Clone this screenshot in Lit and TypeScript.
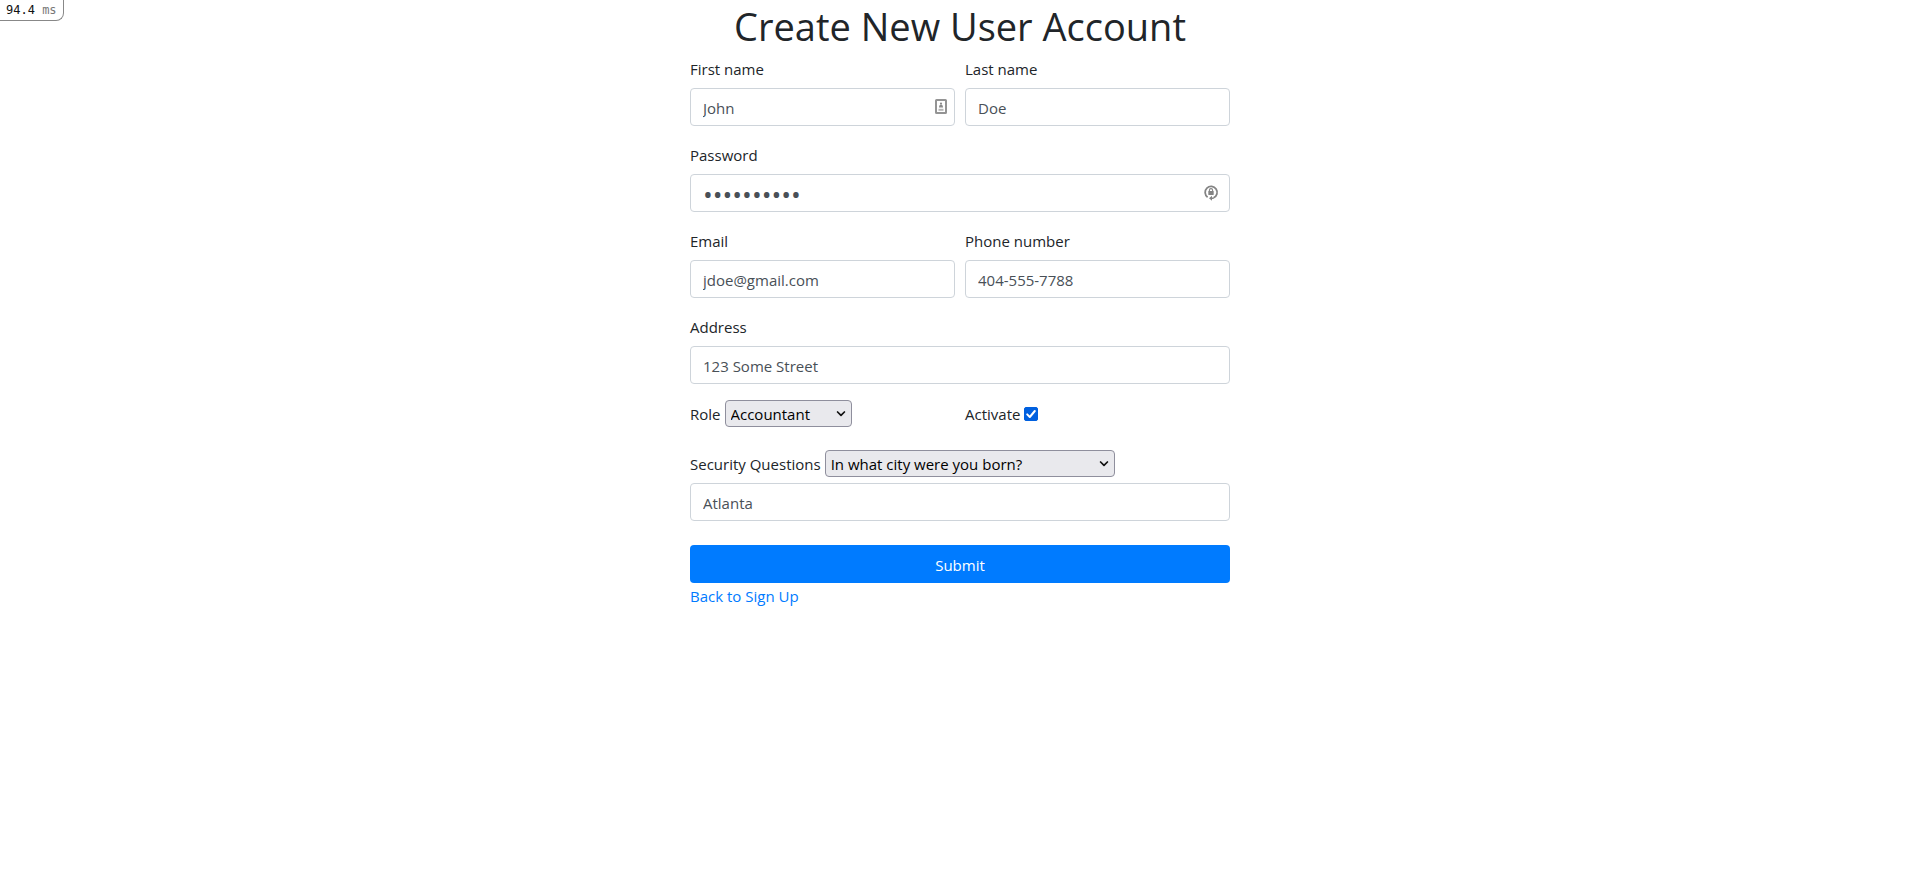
import { LitElement, html, css, nothing, type TemplateResult } from "lit";
import { customElement } from "lit/decorators.js";

interface Field {
  id: string;
  label: string;
  type: string;
  value: string;
  icon?: TemplateResult;
}

const identityIcon = html`<svg class="field-icon" viewBox="0 0 16 16" aria-hidden="true">
  <rect x="3" y="1" width="10" height="13" rx=".5" fill="none" stroke="#949494" stroke-width="2" />
  <circle cx="8" cy="4.6" r="1.1" fill="#8b8b8b" />
  <path d="M6 8.6c0-2 .9-3 2-3s2 1 2 3z" fill="#8b8b8b" />
  <path d="M5.5 10.8h5" stroke="#b5b5b5" stroke-width="2" />
</svg>`;

const passwordIcon = html`<svg class="field-icon lock-icon" viewBox="0 0 16 16" aria-hidden="true">
  <path d="M4.6 12.2a6 6 0 1 1 6 .6" fill="none" stroke="#848484" stroke-width="1.8" />
  <path d="M6.4 6.4V5.2a1.6 1.6 0 0 1 3.2 0v1.2" fill="none" stroke="#848484" stroke-width="1.1" />
  <rect x="5.3" y="6" width="5.4" height="4" rx=".4" fill="#848484" />
  <path d="M6 13.2 9 10.8v1.6h2.4l-1 1.7H9v1.7z" fill="#848484" />
</svg>`;

const chevron = html`<svg class="chevron" viewBox="0 0 10 6" aria-hidden="true">
  <path d="M1.6 1 5 4.4 8.4 1" fill="none" stroke="#111" stroke-width="1.7" stroke-linecap="round" stroke-linejoin="round" />
</svg>`;

@customElement("app-root")
export class AppRoot extends LitElement {
  static styles = css`
    :host {
      display: block;
      font-family: "Open Sans", "Noto Sans", sans-serif;
      font-size: 15px;
      line-height: 24px;
      color: #212529;
    }
    *, *::before { box-sizing: border-box; }
    .timing {
      position: absolute;
      top: 0;
      left: 0;
      padding: 0 6px;
      border: solid #888;
      border-width: 0 1px 1px 0;
      border-radius: 0 0 8px 0;
      background: #fff;
      font: 12px/20px "DejaVu Sans Mono", monospace;
      color: #111;
    }
    .unit { color: #777; }
    .page {
      max-width: 540px;
      margin: 0 auto;
    }
    .title {
      margin: 0;
      padding: 2px 0 6px;
      font-size: 38px;
      font-weight: 400;
      line-height: 48px;
      text-align: center;
      white-space: nowrap;
    }
    .row {
      display: grid;
      grid-auto-flow: column;
      grid-auto-columns: 1fr;
      gap: 10px;
      margin-bottom: 16px;
    }
    .field { display: grid; gap: 7px; }
    .label { padding-top: 1px; }
    .control { display: grid; align-items: center; }
    .control > * { grid-area: 1 / 1; }
    .input {
      width: 100%;
      height: 38px;
      padding: 7px 12px 5px;
      border: 1px solid #ced4da;
      border-radius: 4px;
      background: #fff;
      color: #495057;
      font: inherit;
    }
    .input[type="password"] { font-size: 26px; }
    .field-icon {
      width: 16px;
      height: 16px;
      margin-right: 6px;
      justify-self: end;
    }
    .lock-icon { margin-right: 11px; }
    .options { margin-bottom: 23px; }
    .inline {
      display: flex;
      align-items: center;
      gap: 4px;
      height: 27px;
    }
    .select-wrap { display: grid; align-items: center; }
    .select-wrap > * { grid-area: 1 / 1; }
    .select {
      appearance: none;
      width: 127px;
      height: 27px;
      padding: 1px 24px 0 5px;
      border: 1px solid #8f8f9d;
      border-radius: 4px;
      background: #e9e9ed;
      color: #000;
      font: inherit;
    }
    .wide { width: 290px; }
    .chevron {
      width: 10px;
      height: 6px;
      margin-right: 6px;
      justify-self: end;
      pointer-events: none;
    }
    .check-wrap { display: grid; }
    .check-wrap > * { grid-area: 1 / 1; }
    .check {
      appearance: none;
      width: 14px;
      height: 14px;
      margin: 0;
      border: 1px solid #8f8f9d;
      border-radius: 2px;
    }
    .check:checked { border-color: #0060df; background: #0060df; }
    .tick { width: 14px; height: 14px; pointer-events: none; }
    .security { margin-bottom: 6px; }
    .submit {
      display: block;
      width: 100%;
      height: 38px;
      margin: 24px 0 1px;
      padding: 2px 12px 0;
      border: 0;
      border-radius: 4px;
      background: #007bff;
      color: #fff;
      font: inherit;
      cursor: pointer;
    }
    .link { color: #007bff; text-decoration: none; }
  `;

  private rows: Field[][] = [
    [
      { id: "first", label: "First name", type: "text", value: "John", icon: identityIcon },
      { id: "last", label: "Last name", type: "text", value: "Doe" },
    ],
    [{ id: "password", label: "Password", type: "password", value: "Passw0rd!1", icon: passwordIcon }],
    [
      { id: "email", label: "Email", type: "email", value: "jdoe@gmail.com" },
      { id: "phone", label: "Phone number", type: "tel", value: "404-555-7788" },
    ],
    [{ id: "address", label: "Address", type: "text", value: "123 Some Street" }],
  ];

  private renderField(f: Field) {
    return html`<div class="field">
      <label class="label" for=${f.id}>${f.label}</label>
      <div class="control">
        <input class="input" id=${f.id} type=${f.type} .value=${f.value} />
        ${f.icon ?? nothing}
      </div>
    </div>`;
  }

  render() {
    return html`
      <div class="timing">94.4 <span class="unit">ms</span></div>
      <main class="page">
        <h1 class="title">Create New User Account</h1>
        <form @submit=${(e: Event) => e.preventDefault()}>
          ${this.rows.map((r) => html`<div class="row">${r.map((f) => this.renderField(f))}</div>`)}
          <div class="row options">
            <div class="inline">
              <label class="label" for="role">Role</label>
              <div class="select-wrap">
                <select class="select" id="role"><option>Accountant</option></select>
                ${chevron}
              </div>
            </div>
            <div class="inline">
              <label for="active">Activate</label>
              <div class="check-wrap">
                <input class="check" id="active" type="checkbox" checked />
                <svg class="tick" viewBox="0 0 14 14" aria-hidden="true">
                  <path d="M3.2 7.4 5.8 10l5-6" fill="none" stroke="#fff" stroke-width="2" stroke-linecap="round" stroke-linejoin="round" />
                </svg>
              </div>
            </div>
          </div>
          <div class="inline security">
            <label class="label" for="question">Security Questions</label>
            <div class="select-wrap">
              <select class="select wide" id="question"><option>In what city were you born?</option></select>
              ${chevron}
            </div>
          </div>
          <input class="input" type="text" aria-label="Security answer" .value=${"Atlanta"} />
          <button class="submit" type="submit">Submit</button>
        </form>
        <a class="link" href="#">Back to Sign Up</a>
      </main>
    `;
  }
}
